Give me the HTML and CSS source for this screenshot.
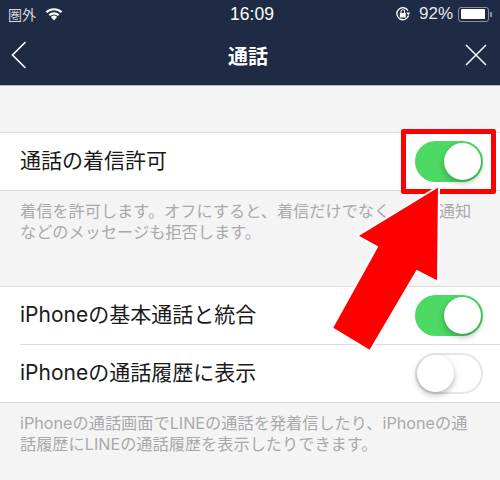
FILE: index.html
```html
<!DOCTYPE html>
<html lang="ja">
<head>
<meta charset="utf-8">
<title>通話</title>
<link rel="stylesheet" href="styles.css">
</head>
<body>
<div class="app">
  <header class="header">
    <div class="status">
      <div class="status-left">
        <span>圏外</span>
        <svg class="wifi" width="20" height="14" viewBox="0 0 20 14"><path d="M10 13.5 6.9 10a4.6 4.6 0 0 1 6.2 0Z" fill="#fff"/><path d="M5.3 8.2a7 7 0 0 1 9.4 0M2.4 5.2a11.2 11.2 0 0 1 15.2 0" fill="none" stroke="#fff" stroke-width="2.2"/></svg>
      </div>
      <div class="status-time">16:09</div>
      <div class="status-right">
        <svg class="lock" width="16" height="16" viewBox="0 0 16 16"><path d="M13.6 9.5A6 6 0 1 1 13 4.6" fill="none" stroke="#fff" stroke-width="1.3"/><path d="M11.4 6.6h3.8L13.3 9.4Z" fill="#fff"/><rect x="4.8" y="7" width="6" height="4.6" rx=".6" fill="#fff"/><path d="M6 7V5.6a1.8 1.8 0 0 1 3.6 0V7" fill="none" stroke="#fff" stroke-width="1.1"/></svg>
        <span class="pct">92%</span>
        <span class="battery"><span class="battery-fill"></span></span>
        <span class="battery-tip"></span>
      </div>
    </div>
    <nav class="nav">
      <svg width="16" height="28" viewBox="0 0 16 28"><path d="M14.5 1 1.5 14l13 13" fill="none" stroke="#fff" stroke-width="1.6"/></svg>
      <div class="title">通話</div>
      <svg width="22" height="22" viewBox="0 0 22 22"><path d="M1 1l20 20M21 1 1 21" fill="none" stroke="#fff" stroke-width="1.5"/></svg>
    </nav>
  </header>
  <main class="content">
    <section class="group">
      <div class="row"><span class="label">通話の着信許可</span><span class="toggle on"></span></div>
    </section>
    <p class="help">着信を許可します。オフにすると、着信だけでなく、通話通知などのメッセージも拒否します。</p>
    <section class="group">
      <div class="row row-sep"><span class="label">iPhoneの基本通話と統合</span><span class="toggle on"></span></div>
      <div class="row"><span class="label">iPhoneの通話履歴に表示</span><span class="toggle"></span></div>
    </section>
    <p class="help">iPhoneの通話画面でLINEの通話を発着信したり、iPhoneの通話履歴にLINEの通話履歴を表示したりできます。</p>
  </main>
  <div class="highlight"></div>
  <svg class="arrow" width="500" height="480" viewBox="0 0 500 480"><path d="M439 186 357 236 377 247 332 328 370 351 417 271 438 282Z" fill="#fe0000" stroke="#fff" stroke-width="2"/></svg>
</div>
</body>
</html>
```
FILE: styles.css
```css
* { box-sizing: border-box; }
html, body { margin: 0; padding: 0; }
body {
  width: 500px;
  height: 480px;
  overflow: hidden;
  font-family: "Liberation Sans", "Noto Sans CJK JP", sans-serif;
  background: #f4f4f5;
}
.app { position: relative; width: 500px; height: 480px; overflow: hidden; }
.header { height: 86px; background: #1f2a44; border-bottom: 1px solid #b9bdc8; color: #fff; }
.status {
  height: 28px;
  padding: 0 8px 0 8px;
  display: grid;
  grid-template-columns: 1fr auto 1fr;
  align-items: center;
  font-size: 16px;
}
.status-left { display: flex; align-items: center; gap: 8px; font-size: 14px; color: #d5d8df; }
.status-time { font-size: 17.5px; padding-left: 4px; }
.status-right { display: flex; align-items: center; justify-content: flex-end; }
.lock { margin-right: 8px; }
.pct { margin-right: 5px; font-size: 17px; color: #e6e8ec; }
.battery { width: 31px; height: 15px; border: 1px solid #8a90a0; border-radius: 3px; padding: 1.5px; display: flex; }
.battery-fill { flex: 1; background: #fff; border-radius: 1px; margin-right: 2px; }
.battery-tip { width: 2px; height: 5px; background: #8a90a0; margin-left: 1px; }
.nav {
  height: 57px;
  padding: 0 13px 3px 11px;
  display: flex;
  align-items: center;
  justify-content: space-between;
}
.title { font-size: 20px; font-weight: 700; margin-left: 4px; }
.content { padding-top: 46px; }
.group { background: #fff; border-top: 1px solid #dcdcdc; border-bottom: 1px solid #dcdcdc; }
.row {
  height: 57px;
  margin-left: 20px;
  padding-right: 17px;
  display: flex;
  align-items: center;
  justify-content: space-between;
  font-family: Inter, "Noto Sans CJK JP", sans-serif;
  font-size: 21px;
  color: #1a1a1a;
}
.label { margin-bottom: 5px; }
.row-sep { height: 58px; border-bottom: 1px solid #dcdcdc; }
.toggle {
  position: relative;
  flex: none;
  width: 68px;
  height: 41px;
  border-radius: 21px;
  background: #fff;
  border: 2px solid #e6e6e6;
}
.toggle::after {
  content: "";
  position: absolute;
  left: 0;
  top: 0;
  width: 37px;
  height: 37px;
  border-radius: 50%;
  background: #fff;
  box-shadow: 0 3px 6px rgba(0,0,0,.28);
}
.toggle.on { background: #4cd964; border-color: #4cd964; }
.toggle.on::after { left: 27px; }
.help {
  margin: 0;
  padding: 10px 20px 0;
  height: 95px;
  font-family: Inter, "Noto Sans CJK JP", sans-serif;
  font-size: 16.2px;
  line-height: 21px;
  color: #a9a9ab;
}
.highlight {
  position: absolute;
  left: 401px;
  top: 129px;
  width: 95px;
  height: 65px;
  border: 5px solid #fe0000;
  border-radius: 2px;
}
.arrow { position: absolute; left: 0; top: 0; }
```
